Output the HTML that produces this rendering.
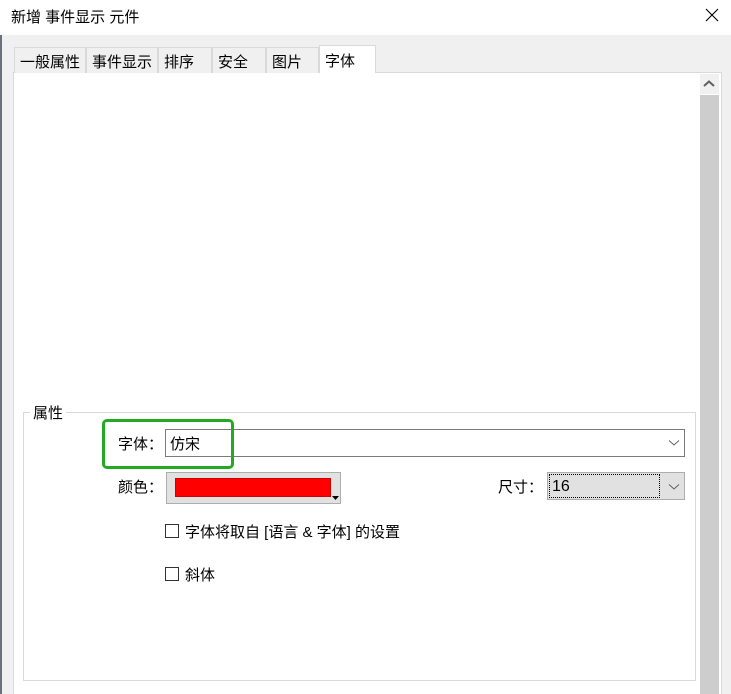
<!DOCTYPE html>
<html><head><meta charset="utf-8"><style>
*{margin:0;padding:0;box-sizing:border-box}
html,body{width:731px;height:694px;overflow:hidden}
body{background:#f0f0f0;font-family:"Liberation Sans","Noto Sans CJK SC",sans-serif;font-size:15px;color:#000;position:relative}
.a{position:absolute}
.tab{position:absolute;top:47px;height:26px;border:1px solid #d9d9d9;border-bottom:none;background:#f0f0f0;padding:3px 0 0 5px;font-size:15px;white-space:nowrap}
.cb{position:absolute;width:14px;height:14px;border:1px solid #333;background:#fff}
</style></head><body>
<div class="a" style="left:0;top:0;width:731px;height:35px;background:#fff"></div>
<div class="a" style="left:11px;top:6px;font-size:15px">新增 事件显示 元件</div>
<svg class="a" style="left:705px;top:8px" width="14" height="14"><path d="M1 1L13 13M13 1L1 13" stroke="#000" stroke-width="1.1"/></svg>
<div class="a" style="left:0;top:35px;width:2px;height:659px;background:#6b7080"></div>
<div class="a" style="left:13px;top:72px;width:709px;height:630px;background:#fff;border:1px solid #d9d9d9"></div>
<div class="tab" style="left:14px;width:72px">一般属性</div>
<div class="tab" style="left:86px;width:72px">事件显示</div>
<div class="tab" style="left:158px;width:54px">排序</div>
<div class="tab" style="left:212px;width:54px">安全</div>
<div class="tab" style="left:266px;width:53px">图片</div>
<div class="tab" style="left:319px;top:45px;width:57px;height:28px;background:#fff;padding-top:4px">字体</div>
<div class="a" style="left:700px;top:74px;width:19px;height:20px;background:#f0f0f0"></div>
<svg class="a" style="left:703px;top:80px" width="12" height="8"><path d="M1 6L6 1.5L11 6" stroke="#606060" stroke-width="2" fill="none"/></svg>
<div class="a" style="left:700px;top:95px;width:19px;height:600px;background:#cdcdcd"></div>
<div class="a" style="left:23px;top:412px;width:673px;height:269px;border:1px solid #d9d9d9"></div>
<div class="a" style="left:30px;top:402px;background:#fff;padding:0 3px">属性</div>
<div class="a" style="left:118px;top:433px">字体：</div>
<div class="a" style="left:165px;top:429px;width:520px;height:28px;border:1px solid #7a7a7a;background:#fff;padding:3px 0 0 4px">仿宋</div>
<svg class="a" style="left:668px;top:439px" width="12" height="8"><path d="M1 1.5L6 6L11 1.5" stroke="#606060" fill="none"/></svg>
<div class="a" style="left:102px;top:419px;width:132px;height:50px;border:3px solid #22aa22;border-radius:5px"></div>
<div class="a" style="left:118px;top:476px">颜色：</div>
<div class="a" style="left:166px;top:472px;width:175px;height:32px;border:1px solid #adadad;background:#e1e1e1"></div>
<div class="a" style="left:175px;top:478px;width:156px;height:19px;background:#f00;border:1px solid #c00"></div>
<svg class="a" style="left:332px;top:496px" width="7" height="5"><path d="M0 0H7L3.5 4Z" fill="#000"/></svg>
<div class="a" style="left:498px;top:476px">尺寸：</div>
<div class="a" style="left:547px;top:472px;width:138px;height:28px;border:1px solid #adadad;background:#e1e1e1"></div>
<div class="a" style="left:549px;top:474px;width:111px;height:24px;border:1px dotted #000;padding:3px 0 0 2px;font-size:16px">16</div>
<svg class="a" style="left:668px;top:483px" width="12" height="8"><path d="M1 1.5L6 6L11 1.5" stroke="#606060" fill="none"/></svg>
<div class="cb" style="left:165px;top:524px"></div>
<div class="a" style="left:185px;top:521px">字体将取自 [语言 &amp; 字体] 的设置</div>
<div class="cb" style="left:165px;top:567px"></div>
<div class="a" style="left:185px;top:564px">斜体</div>
</body></html>
